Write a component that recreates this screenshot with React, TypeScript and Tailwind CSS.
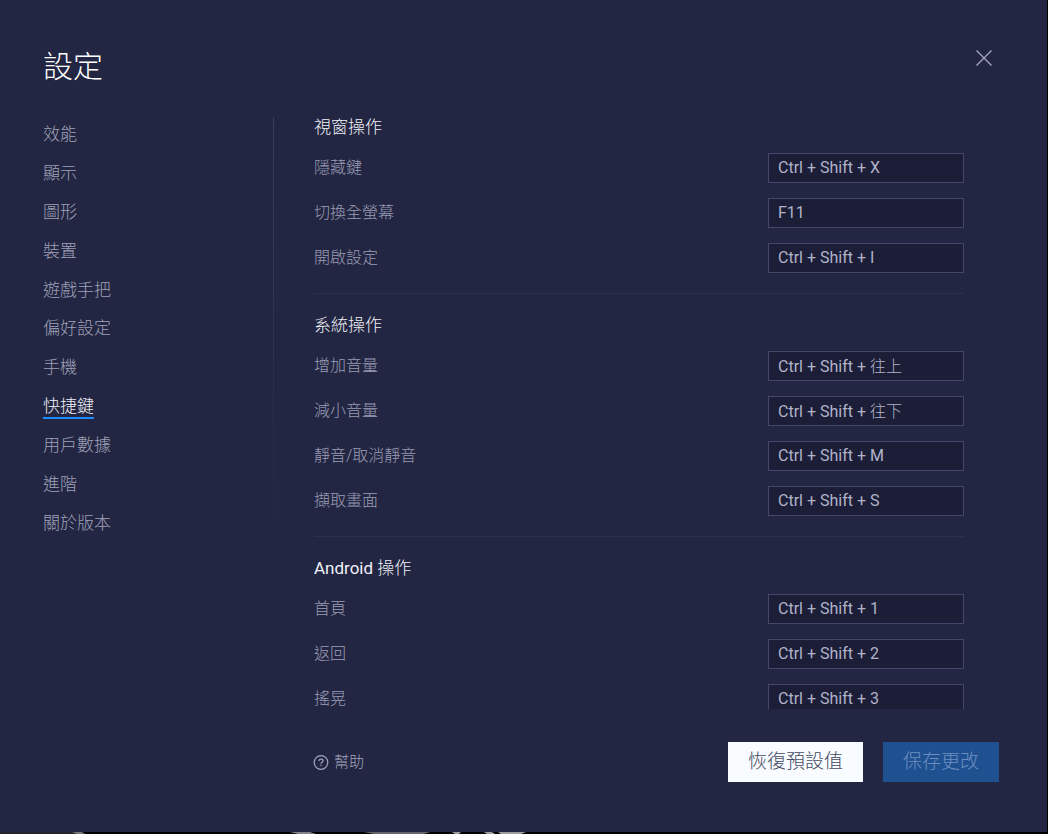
import { useState } from "react";

const navItems = [
  { id: "performance", label: "效能" },
  { id: "display", label: "顯示" },
  { id: "graphics", label: "圖形" },
  { id: "device", label: "裝置" },
  { id: "gamepad", label: "遊戲手把" },
  { id: "preferences", label: "偏好設定" },
  { id: "phone", label: "手機" },
  { id: "shortcuts", label: "快捷鍵" },
  { id: "user-data", label: "用戶數據" },
  { id: "advanced", label: "進階" },
  { id: "about", label: "關於版本" },
];

const sections = [
  {
    title: "視窗操作",
    rows: [
      { id: "boss-key", label: "隱藏鍵", keys: "Ctrl + Shift + X" },
      { id: "fullscreen", label: "切換全螢幕", keys: "F11" },
      { id: "open-settings", label: "開啟設定", keys: "Ctrl + Shift + I" },
    ],
  },
  {
    title: "系統操作",
    rows: [
      { id: "volume-up", label: "增加音量", keys: "Ctrl + Shift + 往上" },
      { id: "volume-down", label: "減小音量", keys: "Ctrl + Shift + 往下" },
      { id: "mute", label: "靜音/取消靜音", keys: "Ctrl + Shift + M" },
      { id: "screenshot", label: "擷取畫面", keys: "Ctrl + Shift + S" },
    ],
  },
  {
    title: "Android 操作",
    rows: [
      { id: "home", label: "首頁", keys: "Ctrl + Shift + 1" },
      { id: "back", label: "返回", keys: "Ctrl + Shift + 2" },
      { id: "shake", label: "搖晃", keys: "Ctrl + Shift + 3" },
    ],
  },
];

interface ShortcutRowProps {
  id: string;
  label: string;
  keys: string;
}

const ShortcutRow = ({ id, label, keys }: ShortcutRowProps) => {
  return <div className="flex items-center justify-between">
    <label htmlFor={id} className="text-base leading-6 text-[#9a9cb5]">{label}</label>
    <input
      id={id}
      type="text"
      readOnly
      value={keys}
      className="h-[30px] w-[196px] border border-[#45476a] bg-[#1c1e38] px-[9px] pb-[2px] font-['Roboto','Noto_Sans_CJK_TC_Light','Noto_Sans_CJK_TC',sans-serif] text-base leading-6 font-normal text-[#b1b3c8] outline-none"
    />
  </div>
}

const SideNav = () => {
  const [active, setActive] = useState("shortcuts");

  return <div className="flex w-[231px] shrink-0 items-start justify-between">
    <nav className="mt-[2px] flex h-[427px] flex-col items-start">
      {navItems.map((item) => (
        <a
          key={item.id}
          href={`#${item.id}`}
          onClick={() => setActive(item.id)}
          className="flex flex-1 items-center text-[17px]"
        >
          <span className={item.id === active ? "block border-b-2 border-[#1a8cff] leading-[22px] text-[#f0f1f8]" : "block border-b-2 border-transparent leading-[22px] text-[#9fa1b9]"}>
            {item.label}
          </span>
        </a>
      ))}
    </nav>
    <div className="mt-[3px] h-[427px] w-px bg-linear-to-b from-[#3a3d5c] to-[#232642]" />
  </div>
}

const HelpIcon = () => {
  return <svg width="16" height="16" viewBox="0 0 16 16" fill="none" stroke="currentColor" strokeWidth="1.2">
    <circle cx="8" cy="8.5" r="6.8" />
    <path d="M6 7c0-1.2.9-1.9 2-1.9s2 .7 2 1.8c0 1.4-2 1.5-2 2.9" />
    <path d="M8 10.8v1.3" />
  </svg>
}

// Slivers of the game showing below the settings window
const BottomEdge = () => {
  return <svg className="h-[2px] w-full" viewBox="0 0 1048 2" preserveAspectRatio="none">
    <path d="M0 0h72l12 2H0z" fill="#25262c" />
    <path d="M72 0h10l3 2h-8z" fill="#77777c" />
    <path d="M290 0h20l6 2h-18z" fill="#85828a" />
    <path d="M364 0h66l-6 2h-50z" fill="#67636a" />
    <path d="M452 0h9l-2 2h-4zM484 0h8l3 2h-8zM498 0h28l-5 2h-20z" fill="#a09da2" />
  </svg>
}

export default function App() {
  return <div className="flex h-screen flex-col bg-black font-['Roboto','Noto_Sans_CJK_TC',sans-serif] font-light">
    <main className="mr-px flex min-h-0 flex-1 flex-col bg-[#232642] pb-[50px] pl-[43px] pr-12">
      <header className="flex items-start justify-between pt-[47px]">
        <h1 className="text-[30px] leading-10 text-white">設定</h1>
        <button type="button" aria-label="關閉" className="mr-[6px] mt-[2px] text-[#a3a5bd]">
          <svg width="18" height="18" viewBox="0 0 18 18" fill="none" stroke="currentColor" strokeWidth="1.4">
            <path d="M1.5 1.5l15 15M16.5 1.5l-15 15" />
          </svg>
        </button>
      </header>

      <div className="mt-[27px] flex min-h-0 flex-1 gap-10">
        <SideNav />
        <div className="mr-[35px] min-w-0 flex-1 overflow-y-auto pb-2 [scrollbar-width:none]">
          {sections.map((section) => (
            <section key={section.title} className="border-b border-[#2c2f4e] pb-5 pt-[19px] first:pt-px last:border-b-0">
              <h2 className="mb-[14px] font-['Roboto','Noto_Sans_CJK_TC_Light','Noto_Sans_CJK_TC',sans-serif] text-[17px] font-normal leading-6 text-[#f0f1f8]">{section.title}</h2>
              <div className="flex flex-col gap-[15px]">
                {section.rows.map((row) => <ShortcutRow key={row.id} {...row} />)}
              </div>
            </section>
          ))}
        </div>
      </div>

      <footer className="mt-[33px] flex items-center justify-between pl-[270px]">
        <a href="#help" className="flex items-center gap-[5px] text-[15px] leading-6 text-[#a3a5bd]">
          <HelpIcon />
          幫助
        </a>
        <div className="flex gap-5">
          <button type="button" className="h-10 bg-[#f8fbff] px-5 text-[19px] text-[#454961]">恢復預設值</button>
          <button type="button" className="h-10 bg-[#1f5190] px-5 text-[19px] text-[#6c8fc2]">保存更改</button>
        </div>
      </footer>
    </main>
    <BottomEdge />
  </div>
}
